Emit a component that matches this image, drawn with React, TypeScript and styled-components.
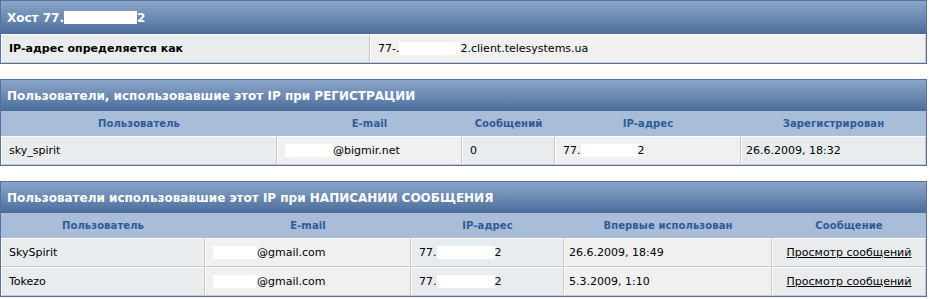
import React from 'react';
import styled, { createGlobalStyle } from 'styled-components';

const GlobalStyle = createGlobalStyle`
  html, body {
    margin: 0;
    padding: 0;
    background: #ffffff;
    font-family: "DejaVu Sans", Verdana, sans-serif;
  }
`;

const Page = styled.div`
  display: flex;
  flex-direction: column;
  gap: 15px;
  width: 927px;
`;

const Panel = styled.div`
  border: 1px solid #56729c;
  background: #ffffff;
`;

const TitleBar = styled.div<{ $h: number }>`
  height: ${({ $h }) => $h}px;
  display: flex;
  align-items: center;
  padding-left: 6px;
  background: linear-gradient(to bottom, #8ba5c9 0%, #6c8ab3 50%, #4b6d9b 100%);
  color: #ffffff;
  font-size: 12px;
  font-weight: bold;
  white-space: nowrap;
`;

const Row = styled.div<{ $cols: string }>`
  display: grid;
  grid-template-columns: ${({ $cols }) => $cols};
`;

const HeadCell = styled.div`
  height: 25px;
  display: flex;
  align-items: center;
  justify-content: center;
  background: #a9bcd8;
  color: #2d5b97;
  font-size: 10px;
  font-weight: bold;
  letter-spacing: 0.1px;
  white-space: nowrap;
`;

const Cell = styled.div<{ $alt?: boolean; $center?: boolean; $bold?: boolean; $pad?: number }>`
  box-sizing: border-box;
  height: 29px;
  display: flex;
  align-items: center;
  justify-content: ${({ $center }) => ($center ? 'center' : 'flex-start')};
  padding-left: ${({ $center, $pad }) => ($center ? 0 : $pad ?? 7)}px;
  border-top: 1px solid #ffffff;
  border-left: 1px solid #ffffff;
  border-right: 1px solid #c9c9c9;
  border-bottom: 1px solid #c9c9c9;
  background: ${({ $alt }) => ($alt ? '#f0f0f0' : '#e9ecef')};
  color: #000000;
  font-size: 11px;
  font-weight: ${({ $bold }) => ($bold ? 'bold' : 'normal')};
  white-space: nowrap;
`;

const Hidden = styled.span<{ $w: number }>`
  display: inline-block;
  width: ${({ $w }) => $w}px;
  height: 13px;
  background: #ffffff;
  vertical-align: middle;
`;

const Link = styled.a`
  color: #000000;
  text-decoration: underline;
  cursor: pointer;
`;

const regCols = '276px 185px 93px 186px 185px';
const postCols = '204px 206px 153px 208px 154px';

const registered = [
  { user: 'sky_spirit', mail: '@bigmir.net', mailHide: 48, posts: '0', date: '26.6.2009, 18:32' },
];

const posted = [
  { user: 'SkySpirit', mail: '@gmail.com', date: '26.6.2009, 18:49' },
  { user: 'Tokezo', mail: '@gmail.com', date: '5.3.2009, 1:10' },
];

export default function App() {
  return (
    <>
      <GlobalStyle />
      <Page>
        <Panel>
          <TitleBar $h={33}>
            Хост 77.<Hidden $w={73} />2
          </TitleBar>
          <Row $cols="369px 556px">
            <Cell $bold>IP-адрес определяется как</Cell>
            <Cell $alt>
              77-.<Hidden $w={61} />2.client.telesystems.ua
            </Cell>
          </Row>
        </Panel>

        <Panel>
          <TitleBar $h={31}>Пользователи, использовавшие этот IP при РЕГИСТРАЦИИ</TitleBar>
          <Row $cols={regCols}>
            <HeadCell>Пользователь</HeadCell>
            <HeadCell>E-mail</HeadCell>
            <HeadCell>Сообщений</HeadCell>
            <HeadCell>IP-адрес</HeadCell>
            <HeadCell>Зарегистрирован</HeadCell>
          </Row>
          {registered.map((r) => (
            <Row $cols={regCols} key={r.user}>
              <Cell>{r.user}</Cell>
              <Cell $alt>
                <Hidden $w={r.mailHide} />
                {r.mail}
              </Cell>
              <Cell>{r.posts}</Cell>
              <Cell $alt>
                77.<Hidden $w={57} />2
              </Cell>
              <Cell $pad={4}>{r.date}</Cell>
            </Row>
          ))}
        </Panel>

        <Panel>
          <TitleBar $h={31}>Пользователи использовавшие этот IP при НАПИСАНИИ СООБЩЕНИЯ</TitleBar>
          <Row $cols={postCols}>
            <HeadCell>Пользователь</HeadCell>
            <HeadCell>E-mail</HeadCell>
            <HeadCell>IP-адрес</HeadCell>
            <HeadCell>Впервые использован</HeadCell>
            <HeadCell>Сообщение</HeadCell>
          </Row>
          {posted.map((r) => (
            <Row $cols={postCols} key={r.user}>
              <Cell>{r.user}</Cell>
              <Cell $alt>
                <Hidden $w={44} />
                {r.mail}
              </Cell>
              <Cell>
                77.<Hidden $w={58} />2
              </Cell>
              <Cell $alt $pad={4}>
                {r.date}
              </Cell>
              <Cell $center>
                <Link>Просмотр сообщений</Link>
              </Cell>
            </Row>
          ))}
        </Panel>
      </Page>
    </>
  );
}
